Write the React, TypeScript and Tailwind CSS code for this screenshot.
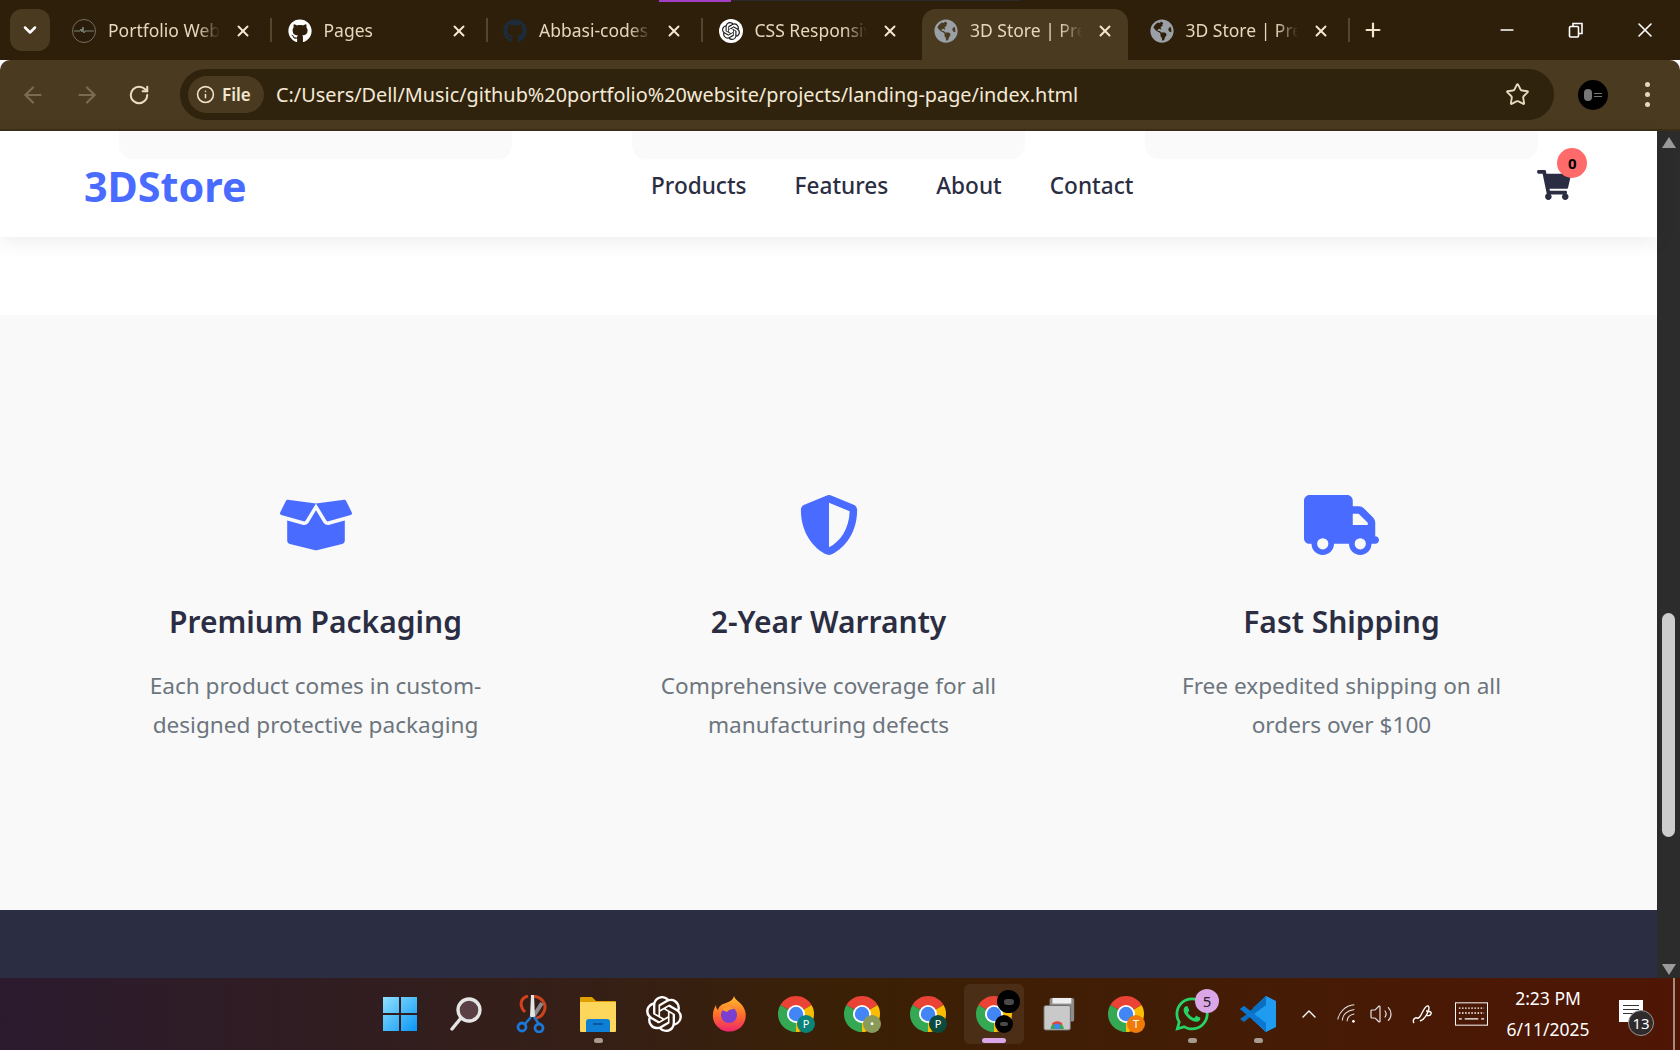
import React from 'react'
import { ArrowLeft, ArrowRight, RotateCw, Info, Star, X, Plus, Minus, ChevronDown, ChevronUp, Volume2 } from 'lucide-react'
import { FaBoxOpen, FaShieldAlt, FaShoppingCart, FaGithub, FaGlobeAmericas, FaWhatsapp } from 'react-icons/fa'
import { FaTruck } from 'react-icons/fa6'
import { SiOpenai } from 'react-icons/si'

const font = { fontFamily: '"Noto Sans", "Open Sans", sans-serif' }

const features = [
  { icon: <FaBoxOpen className="w-[72px] h-[58px]" />, title: 'Premium Packaging', text: ['Each product comes in custom-', 'designed protective packaging'] },
  { icon: <FaShieldAlt className="w-[60px] h-[60px]" />, title: '2-Year Warranty', text: ['Comprehensive coverage for all', 'manufacturing defects'] },
  { icon: <FaTruck className="w-[75px] h-[60px]" />, title: 'Fast Shipping', text: ['Free expedited shipping on all', 'orders over $100'] },
]

function Favicon({ kind }: { kind: string }) {
  if (kind === 'portfolio') {
    return (
      <svg viewBox="0 0 24 24" className="w-6 h-6 shrink-0">
        <circle cx="12" cy="12" r="11.5" fill="#2a1c0a" stroke="#8a8270" strokeWidth="0.8" />
        <path d="M2 12h6l1-2 1 3 1-5 1 6 1-2h9" fill="none" stroke="#9fb0a0" strokeWidth="0.7" />
      </svg>
    )
  }
  if (kind === 'github') return <FaGithub className="w-6 h-6 shrink-0 text-white" />
  if (kind === 'github-dark') return <FaGithub className="w-6 h-6 shrink-0 text-[#1d2c3c]" />
  if (kind === 'openai') {
    return (
      <span className="w-6 h-6 shrink-0 rounded-full bg-white flex items-center justify-center">
        <SiOpenai className="w-[18px] h-[18px] text-[#222]" />
      </span>
    )
  }
  return <FaGlobeAmericas className="w-6 h-6 shrink-0 text-[#9aa0a6]" />
}

function Tab({ kind, title, active, sep }: { kind: string; title: string; active?: boolean; sep?: boolean }) {
  return (
    <div className={`relative w-[206px] mr-[9.5px] h-[51px] shrink-0 flex items-center pb-[8px] pl-[12px] pr-[14px] ${active ? 'bg-[#4a3a20] rounded-t-[14px]' : ''}`}>
      <Favicon kind={kind} />
      <span className="ml-[12px] w-[112px] whitespace-nowrap overflow-hidden text-[17.5px] text-[#e6d8bd] [mask-image:linear-gradient(to_right,black_80%,transparent)]">{title}</span>
      <X className="ml-auto w-[18px] h-[18px] text-[#f3e7cf]" strokeWidth={2.6} />
      {sep && <span className="absolute -right-[6px] top-[9px] w-[2px] h-[24px] bg-[#54452b]" />}
    </div>
  )
}

function TabStrip() {
  return (
    <div className="relative h-[60px] bg-[#2e1f0b] flex items-end">
      <span className="absolute left-[659px] top-0 w-[72px] h-[2px] bg-[#a43cc4]" />
      <span className="absolute left-[731px] top-0 w-[290px] h-[1px] bg-[#2a2a2a]" />
      <div className="w-[40px] h-[42px] ml-[10px] mr-[10px] mb-[9px] rounded-[12px] bg-[#4a3a20] flex items-center justify-center shrink-0">
        <ChevronDown className="w-5 h-5 text-white" strokeWidth={3} />
      </div>
      <Tab kind="portfolio" title="Portfolio Website" sep />
      <Tab kind="github" title="Pages" sep />
      <Tab kind="github-dark" title="Abbasi-codes" sep />
      <Tab kind="openai" title="CSS Responsive" />
      <Tab kind="globe" title="3D Store | Premium" active />
      <Tab kind="globe" title="3D Store | Premium" sep />
      <Plus className="ml-[9px] mb-[19px] w-[22px] h-[22px] text-[#f0e4cb]" strokeWidth={2.4} />
      <div className="ml-auto h-[60px] flex items-center text-white">
        <span className="w-[69px] flex justify-center"><Minus className="w-[20px] h-[20px]" strokeWidth={2} /></span>
        <span className="w-[69px] flex justify-center">
          <svg viewBox="0 0 16 16" className="w-[16px] h-[16px]" fill="none" stroke="currentColor" strokeWidth="1.6">
            <rect x="1.5" y="4.5" width="9" height="10.5" rx="1" />
            <path d="M5 4.5V1.5h9v10h-3.5" />
          </svg>
        </span>
        <span className="w-[70px] flex justify-center"><X className="w-[24px] h-[24px]" strokeWidth={1.6} /></span>
      </div>
    </div>
  )
}

function Toolbar() {
  return (
    <div className="h-[71px] bg-[#4a3a20] rounded-t-[10px] border-b-2 border-[#3d2f17] flex items-start pt-[9px]">
      <div className="w-[180px] h-[51px] shrink-0 flex items-center">
        <ArrowLeft className="ml-[20px] w-[26px] h-[26px] text-[#7b6c50]" strokeWidth={2} />
        <ArrowRight className="ml-[28px] w-[26px] h-[26px] text-[#7b6c50]" strokeWidth={2} />
        <RotateCw className="ml-[28px] w-[22px] h-[22px] text-[#eaddc2]" strokeWidth={2.2} />
      </div>
      <div className="w-[1374px] h-[51px] rounded-full bg-[#30230e] flex items-center pl-[8px] pr-[24px]">
        <div className="h-[37px] w-[76px] rounded-full bg-[#4a3a20] flex items-center pl-[8px] gap-[7px]">
          <Info className="w-[19px] h-[19px] text-[#eee2c9]" strokeWidth={2} />
          <span className="text-[17px] font-semibold text-[#f1e6cf]">File</span>
        </div>
        <span className="ml-[12px] text-[19.85px] text-[#f4ead6] whitespace-nowrap">C:/Users/Dell/Music/github%20portfolio%20website/projects/landing-page/index.html</span>
        <Star className="ml-auto w-[25px] h-[25px] text-[#e6d8bd]" strokeWidth={1.8} />
      </div>
      <div className="flex-1 h-[51px] flex items-center">
        <span className="ml-[24px] w-[30px] h-[30px] rounded-full bg-black flex items-center pl-[6px] gap-[2px]">
          <span className="w-[8px] h-[12px] rounded-full bg-[#777]" />
          <span className="flex flex-col gap-[2px]">
            <span className="w-[8px] h-px bg-[#777]" />
            <span className="w-[8px] h-px bg-[#777]" />
          </span>
        </span>
        <span className="ml-[37px] flex flex-col gap-[5px]">
          <span className="w-[5px] h-[5px] rounded-full bg-[#e6d8bd]" />
          <span className="w-[5px] h-[5px] rounded-full bg-[#e6d8bd]" />
          <span className="w-[5px] h-[5px] rounded-full bg-[#e6d8bd]" />
        </span>
      </div>
    </div>
  )
}

function Navbar() {
  return (
    <header className="relative z-10 h-[106px] shrink-0 bg-white shadow-[0_4px_20px_rgba(0,0,0,0.08)]">
      <div className="h-[28px] grid grid-cols-[393px_393px_393px] gap-x-[120px] pl-[119px]">
        <div className="bg-[#fafafa] rounded-b-[14px]" />
        <div className="bg-[#fafafa] rounded-b-[14px]" />
        <div className="bg-[#fafafa] rounded-b-[14px]" />
      </div>
      <div className="flex items-start pl-[84px]">
        <span className="w-[567px] text-[41.3px] leading-[44px] mt-[5px] font-bold text-[#4a6bff]">3DStore</span>
        <nav className="flex gap-[48px] mt-[10px] text-[22.6px] leading-[34px] font-medium text-[#2b2d42]">
          <span>Products</span>
          <span>Features</span>
          <span>About</span>
          <span>Contact</span>
        </nav>
        <div className="relative ml-[404px] mt-[11px]">
          <FaShoppingCart className="w-[34px] h-[30px] text-[#2b2d42]" />
          <span className="absolute -top-[22px] left-[20px] w-[30px] h-[30px] rounded-full bg-[#ff6b6b] flex items-center justify-center text-[15px] font-bold text-black">0</span>
        </div>
      </div>
    </header>
  )
}

function Features() {
  return (
    <section className="h-[595px] shrink-0 bg-[#f9f9f9] pt-[180px] pl-[119px] grid grid-cols-[393px_393px_393px] gap-x-[120px] content-start">
      {features.map((f) => (
        <div key={f.title} className="flex flex-col items-center text-center">
          <div className="h-[60px] flex items-center text-[#4a6bff]">{f.icon}</div>
          <h3 className="mt-[47px] text-[30px] leading-[40px] font-semibold text-[#2b2d42] whitespace-nowrap">{f.title}</h3>
          <p className="mt-[25px] text-[22.6px] leading-[38.6px] text-[#6c757d] whitespace-nowrap">
            {f.text[0]}
            <br />
            {f.text[1]}
          </p>
        </div>
      ))}
    </section>
  )
}

function Scrollbar() {
  return (
    <div className="w-[23px] shrink-0 bg-[#2c2c2c] flex flex-col items-center">
      <span className="mt-[6px] w-0 h-0 border-x-[7px] border-x-transparent border-b-[11px] border-b-[#9b9b9b]" />
      <span className="mt-[465px] w-[13px] h-[224px] rounded-full bg-[#cdcdcd]" />
      <span className="mt-auto mb-[3px] w-0 h-0 border-x-[7px] border-x-transparent border-t-[11px] border-t-[#9b9b9b]" />
    </div>
  )
}

function Chrome({ badge, badgeBg }: { badge?: string; badgeBg?: string }) {
  return (
    <span className="relative w-[36px] h-[36px] block">
      <svg viewBox="4 4 40 40" className="w-[36px] h-[36px]">
        <path d="M24 24L6.68 14A20 20 0 0 1 41.32 14Z" fill="#ea4335" />
        <path d="M24 24L41.32 14A20 20 0 0 1 24 44Z" fill="#fbbc04" />
        <path d="M24 24L24 44A20 20 0 0 1 6.68 14Z" fill="#34a853" />
        <circle cx="24" cy="24" r="10" fill="#fff" />
        <circle cx="24" cy="24" r="8" fill="#4285f4" />
      </svg>
      {badge && (
        <span className={`absolute -right-[1px] -bottom-[1px] w-[18px] h-[18px] rounded-full flex items-center justify-center text-[11px] text-white ${badgeBg}`}>{badge}</span>
      )}
    </span>
  )
}

function Slot({ children, dot, active }: { children: React.ReactNode; dot?: boolean; active?: boolean }) {
  return (
    <div className={`relative h-[60px] flex items-center justify-center ${active ? 'w-[60px] mx-[3px] bg-[#ffffff12] rounded-[6px]' : 'w-[66px]'}`}>
      {children}
      {dot && <span className="absolute bottom-[1px] w-[9px] h-[5px] rounded-full bg-[#a89a90]" />}
      {active && <span className="absolute bottom-[1px] w-[24px] h-[5px] rounded-full bg-[#dba6e8]" />}
    </div>
  )
}

function Taskbar() {
  return (
    <footer className="h-[72px] shrink-0 bg-gradient-to-r from-[#2b1a2e] via-[#3a2005] to-[#4f1505] flex items-center pl-[367px] text-white">
      <Slot>
        <svg viewBox="0 0 36 36" className="w-[36px] h-[36px]">
          <defs>
            <linearGradient id="win" x1="0" y1="0" x2="1" y2="1">
              <stop offset="0" stopColor="#8fe1ff" />
              <stop offset="1" stopColor="#0a96f5" />
            </linearGradient>
          </defs>
          <path d="M1 1h16v16H1zM19 1h16v16H19zM1 19h16v16H1zM19 19h16v16H19z" fill="url(#win)" />
        </svg>
      </Slot>
      <Slot>
        <svg viewBox="0 0 36 36" className="w-[36px] h-[36px]" fill="none">
          <circle cx="21" cy="14" r="11" fill="#5a3f45" stroke="#e5e5e5" strokeWidth="3.4" />
          <path d="M13 22L4 33" stroke="#e5e5e5" strokeWidth="3.4" strokeLinecap="round" />
        </svg>
      </Slot>
      <Slot>
        <svg viewBox="0 0 36 38" className="w-[36px] h-[38px]" fill="none">
          <path d="M14 1C6 3 5 11 11 17" stroke="#d2401c" strokeWidth="3" />
          <path d="M20 1c10 2 15 11 7 20l-6 3" stroke="#c9431e" strokeWidth="3" />
          <path d="M28 8L19 22" stroke="#8a8a8a" strokeWidth="4" />
          <path d="M17 0l3 0 1 22h-5z" fill="#e6e6e6" />
          <path d="M17 22L11 29M20 22L25 29" stroke="#1a78d8" strokeWidth="2.5" />
          <circle cx="8" cy="32" r="4" stroke="#1a78d8" strokeWidth="2.8" />
          <circle cx="25" cy="33" r="4" stroke="#1a78d8" strokeWidth="2.8" />
        </svg>
      </Slot>
      <Slot dot>
        <svg viewBox="0 0 36 36" className="w-[36px] h-[36px]">
          <path d="M0 2a1 1 0 0 1 1-1h11l4 4h19a1 1 0 0 1 1 1v4H0z" fill="#e0a100" />
          <path d="M0 6h36v29a1 1 0 0 1-1 1H1a1 1 0 0 1-1-1z" fill="#fcd75c" />
          <path d="M6 36V26a3 3 0 0 1 3-3h18a3 3 0 0 1 3 3v10z" fill="#0f7fd6" />
          <path d="M13 28h10" stroke="#0a4f90" strokeWidth="1.6" />
        </svg>
      </Slot>
      <Slot>
        <SiOpenai className="w-[36px] h-[36px] text-white" />
      </Slot>
      <Slot>
        <svg viewBox="0 0 36 36" className="w-[36px] h-[38px]">
          <defs>
            <linearGradient id="ff" x1="0.5" y1="0" x2="0.5" y2="1">
              <stop offset="0" stopColor="#ffbf2e" />
              <stop offset="0.55" stopColor="#ff6a2c" />
              <stop offset="1" stopColor="#f0246e" />
            </linearGradient>
          </defs>
          <path d="M22 0c1 4 5 5 8 9 5 6 5 15 0 21-5 6-16 8-23 2C0 27-1 17 4 9c0 3 1 4 2 5 1-4 4-6 8-7 3-1 7-3 8-7z" fill="url(#ff)" />
          <circle cx="17" cy="19" r="8" fill="#7a3fd0" />
          <path d="M10 14c3-4 9-4 12-1-3 0-6 1-7 3z" fill="#ff9a2e" />
        </svg>
      </Slot>
      <Slot><Chrome badge="P" badgeBg="bg-[#0b8378]" /></Slot>
      <Slot><Chrome badge="•" badgeBg="bg-[#8a9a5a]" /></Slot>
      <Slot><Chrome badge="P" badgeBg="bg-[#0c4a3e]" /></Slot>
      <Slot active>
        <Chrome />
        <span className="absolute right-[4px] top-[6px] w-[23px] h-[23px] rounded-full bg-black flex items-center justify-center">
          <span className="w-[10px] h-[6px] rounded-full bg-[#4a4a4a]" />
        </span>
        <span className="absolute right-[11px] top-[31px] w-[18px] h-[18px] rounded-full bg-black flex items-center justify-center">
          <span className="w-[8px] h-[4px] rounded-full bg-[#4a4a4a]" />
        </span>
      </Slot>
      <Slot>
        <svg viewBox="0 0 36 36" className="w-[34px] h-[34px]">
          <rect x="7" y="1" width="26" height="25" rx="2" fill="#8c8c8c" />
          <rect x="10" y="1" width="20" height="6" fill="#eee" />
          <rect x="1" y="9" width="28" height="26" rx="2" fill="#c9c9c9" stroke="#6b6b6b" />
          <path d="M8 34a7 7 0 0 1 14 0z" fill="#34a853" />
          <path d="M9 29a7 7 0 0 1 12 0z" fill="#ea4335" />
          <circle cx="15" cy="31" r="3" fill="#4285f4" />
        </svg>
      </Slot>
      <Slot><Chrome badge="T" badgeBg="bg-[#f07a0a]" /></Slot>
      <Slot dot>
        <FaWhatsapp className="w-[38px] h-[38px] text-[#25d366]" />
        <span className="absolute top-[5px] right-[6px] w-[24px] h-[24px] rounded-full bg-[#dba6e8] flex items-center justify-center text-[15px] text-[#222]">5</span>
      </Slot>
      <Slot dot>
        <svg viewBox="0 0 36 36" className="w-[36px] h-[36px]">
          <path d="M26 0l10 5v26l-10 5L8 19z" fill="#1f9cf0" />
          <path d="M26 0v36L13 24l13-6-13-6z" fill="#1f9cf0" />
          <path d="M26 9L10 21l-6 5-4-3 7-5-7-5 4-3 6 5L26 0z" fill="#0a6fc0" />
          <path d="M26 27L4 10 0 13l20 17 6 6z" fill="#0a78d0" />
        </svg>
      </Slot>
      <ChevronUp className="ml-[6px] w-[24px] h-[24px] text-white" strokeWidth={1.4} />
      <svg viewBox="0 0 24 24" className="ml-[15px] w-[22px] h-[22px]" fill="none" stroke="#e5e5e5" strokeWidth="1.1">
        <path d="M2 18C3 10 10 3 20 2M7 19C7 13 12 8 20 7M12 20c0-4 3-7 8-8" />
        <circle cx="19" cy="20" r="1.5" fill="#fff" stroke="none" />
      </svg>
      <Volume2 className="ml-[11px] w-[24px] h-[24px] text-[#e5e5e5]" strokeWidth={1.2} />
      <svg viewBox="0 0 24 24" className="ml-[18px] w-[24px] h-[24px]" fill="none" stroke="#fff" strokeWidth="1.4">
        <path d="M3 21c-2-3 1-6 3-5s3-1 5-5 4-8 6-7 1 4-1 8-4 6-7 7" />
        <path d="M15 9c3 0 6 1 5 3s-3 2-5 1" />
      </svg>
      <svg viewBox="0 0 34 24" className="ml-[20px] w-[33px] h-[24px]" fill="none" stroke="#fff">
        <rect x="0.5" y="0.5" width="33" height="23" strokeWidth="1" />
        <path d="M4 6h26M4 11h26" strokeWidth="1.4" strokeDasharray="1.6 1.6" />
        <path d="M4 17h3M10 17h14M27 17h3" strokeWidth="1.4" />
      </svg>
      <div className="ml-[10px] w-[100px] flex flex-col items-center text-[17.5px] leading-[31px] whitespace-nowrap">
        <span>2:23 PM</span>
        <span>6/11/2025</span>
      </div>
      <div className="relative ml-[21px] -mt-[6px] w-[24px] h-[22px] bg-white">
        <div className="mx-[4px] mt-[5px] flex flex-col gap-[3px]">
          <span className="h-px bg-[#333]" />
          <span className="h-px bg-[#333]" />
          <span className="h-px bg-[#333]" />
        </div>
        <span className="absolute left-[9px] top-[10px] w-[26px] h-[26px] rounded-full bg-[#2f2a2c] border border-[#999] flex items-center justify-center text-[15px] text-white">13</span>
      </div>
      <span className="ml-auto mr-[5px] w-[2px] h-[72px] bg-[#a98a7f]" />
    </footer>
  )
}

export default function App() {
  return (
    <div className="h-screen w-full overflow-hidden flex flex-col" style={font}>
      <TabStrip />
      <Toolbar />
      <div className="flex-1 min-h-0 flex">
        <main className="flex-1 min-w-0 flex flex-col bg-white">
          <Navbar />
          <div className="h-[78px] shrink-0" />
          <Features />
          <div className="flex-1 bg-[#2b2d42]" />
        </main>
        <Scrollbar />
      </div>
      <Taskbar />
    </div>
  )
}
